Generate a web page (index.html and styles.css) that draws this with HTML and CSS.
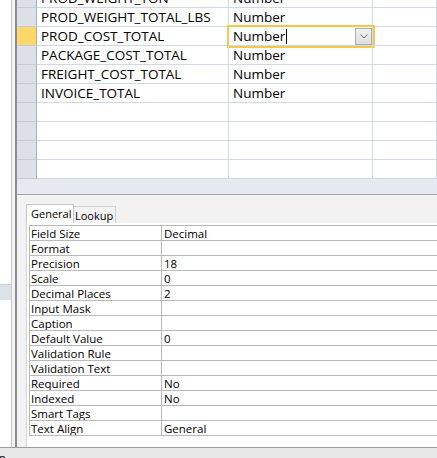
FILE: index.html
```html
<!DOCTYPE html>
<html>
<head>
<meta charset="utf-8">
<link rel="stylesheet" href="styles.css">
</head>
<body>
<div class="app">
  <div class="body">
    <aside class="nav"><div class="nav-sel"></div></aside>
    <div class="split"></div>
    <main class="main">
      <div class="grid">
        <div class="rows">
          <div class="row"><div class="sel"></div><div class="c name">PROD_WEIGHT_TON</div><div class="c type">Number</div><div class="c desc"></div></div>
          <div class="row"><div class="sel"></div><div class="c name">PROD_WEIGHT_TOTAL_LBS</div><div class="c type">Number</div><div class="c desc"></div></div>
          <div class="row cur"><div class="sel"></div><div class="c name">PROD_COST_TOTAL</div><div class="c type focus"><span class="val">Number<span class="caret"></span></span><span class="dd"><svg width="8" height="5" viewBox="0 0 8 5"><path d="M0.5 0.5 L4 4 L7.5 0.5" fill="none" stroke="#6a6a6a" stroke-width="1"/></svg></span></div><div class="c desc"></div></div>
          <div class="row"><div class="sel"></div><div class="c name">PACKAGE_COST_TOTAL</div><div class="c type">Number</div><div class="c desc"></div></div>
          <div class="row"><div class="sel"></div><div class="c name">FREIGHT_COST_TOTAL</div><div class="c type">Number</div><div class="c desc"></div></div>
          <div class="row"><div class="sel"></div><div class="c name">INVOICE_TOTAL</div><div class="c type">Number</div><div class="c desc"></div></div>
          <div class="row"><div class="sel"></div><div class="c name"></div><div class="c type"></div><div class="c desc"></div></div>
          <div class="row"><div class="sel"></div><div class="c name"></div><div class="c type"></div><div class="c desc"></div></div>
          <div class="row"><div class="sel"></div><div class="c name"></div><div class="c type"></div><div class="c desc"></div></div>
          <div class="row"><div class="sel"></div><div class="c name"></div><div class="c type"></div><div class="c desc"></div></div>
        </div>
      </div>
      <div class="grid-foot"></div>
      <section class="props">
        <div class="tabs"><div class="tab active">General</div><div class="tab">Lookup</div></div>
        <div class="page">
          <div class="ptable">
            <div class="pk">Field Size</div><div class="pv">Decimal</div>
            <div class="pk">Format</div><div class="pv"></div>
            <div class="pk">Precision</div><div class="pv">18</div>
            <div class="pk">Scale</div><div class="pv">0</div>
            <div class="pk">Decimal Places</div><div class="pv">2</div>
            <div class="pk">Input Mask</div><div class="pv"></div>
            <div class="pk">Caption</div><div class="pv"></div>
            <div class="pk">Default Value</div><div class="pv">0</div>
            <div class="pk">Validation Rule</div><div class="pv"></div>
            <div class="pk">Validation Text</div><div class="pv"></div>
            <div class="pk">Required</div><div class="pv">No</div>
            <div class="pk">Indexed</div><div class="pv">No</div>
            <div class="pk">Smart Tags</div><div class="pv"></div>
            <div class="pk">Text Align</div><div class="pv">General</div>
          </div>
        </div>
      </section>
    </main>
  </div>
  <footer class="status"><span class="status-text">n</span></footer>
</div>
</body>
</html>
```
FILE: styles.css
```css
html, body { margin: 0; padding: 0; }
body {
  width: 437px;
  height: 458px;
  overflow: hidden;
  background: #fff;
  font-family: "Open Sans", "Noto Sans", sans-serif;
  color: #000;
}
.app { display: flex; flex-direction: column; height: 458px; }
.body {
  display: flex;
  height: 448px;
  box-sizing: border-box;
  border-bottom: 1px solid #9c9c9c;
}
.nav {
  width: 11px;
  background: #fff;
  border-right: 1px solid #c8c8c8;
  padding-top: 284px;
}
.nav-sel {
  height: 15px;
  background: #dde1e8;
  border-top: 1px solid #c9ced6;
}
.split { width: 3px; background: #f3f3f3; }
.main {
  flex: 1;
  min-width: 0;
  border-left: 2px solid #8c8c8c;
  display: flex;
  flex-direction: column;
  overflow: hidden;
}
.grid { height: 179px; overflow: hidden; flex: none; }
.rows { margin-top: -11px; }
.row { display: flex; height: 19px; }
.sel {
  flex: none;
  width: 20px;
  height: 19px;
  box-sizing: border-box;
  background: #dde0e6;
  border-right: 1px solid #a9adb5;
  border-bottom: 1px solid #c6cad2;
}
.row.cur .sel { background: #fdd868; }
.c {
  flex: none;
  box-sizing: border-box;
  height: 19px;
  border-right: 1px solid #d0d7e5;
  border-bottom: 1px solid #d0d7e5;
  padding-left: 4px;
  font-size: 13.5px;
  line-height: 18px;
  white-space: nowrap;
  overflow: hidden;
}
.name { width: 192px; }
.type { width: 144px; }
.desc { flex: 1; }
.type.focus {
  overflow: visible;
  outline: 2px solid #f2c94c;
  outline-offset: 0;
  display: flex;
  justify-content: space-between;
}
.caret {
  display: inline-block;
  width: 1px;
  height: 15px;
  margin-left: 1px;
  background: #000;
  vertical-align: -3px;
}
.dd {
  align-self: flex-end;
  width: 17px;
  height: 17px;
  box-sizing: border-box;
  border: 1px solid #acacac;
  background: linear-gradient(#f2f2f2, #dedede);
  display: flex;
  align-items: center;
  justify-content: center;
}
.grid-foot {
  flex: none;
  height: 15px;
  background: #e6e9ef;
  border-bottom: 1px solid #9ea3ab;
}
.props {
  flex: 1;
  background: #f2f2f2;
  padding: 9px 0 0 9px;
  display: flex;
  flex-direction: column;
  font-size: 11.5px;
}
.tabs { display: flex; align-items: flex-end; height: 19px; flex: none; font-size: 11px; }
.tab {
  box-sizing: border-box;
  height: 17px;
  line-height: 17px;
  background: #f4f4f4;
  border: 1px solid #cfcfcf;
  border-bottom: none;
  border-left: none;
  padding-left: 1px;
  width: 42px;
  white-space: nowrap;
  overflow: hidden;
}
.tab.active {
  height: 19px;
  line-height: 18px;
  background: #fff;
  border-left: 1px solid #c5c5c5;
  border-color: #c5c5c5;
  width: 48px;
  padding-left: 4px;
}
.page {
  flex: 1;
  background: #fff;
  border-left: 1px solid #d6d6d6;
  padding: 2px 0 0 2px;
}
.ptable {
  display: grid;
  grid-template-columns: 132px 1fr;
  border-top: 1px solid #b9b9b9;
  border-left: 1px solid #b9b9b9;
}
.pk, .pv {
  box-sizing: border-box;
  height: 15px;
  line-height: 15px;
  border-bottom: 1px solid #b9b9b9;
  white-space: nowrap;
  overflow: hidden;
}
.pk { border-right: 1px solid #b9b9b9; padding-left: 1px; }
.pv { padding-left: 2px; }
.status {
  flex: 1;
  background: #e8e8e8;
  font-size: 11px;
  line-height: 14px;
  overflow: hidden;
}
.status-text { display: inline-block; margin-left: -1px; margin-top: 3px; }
```
